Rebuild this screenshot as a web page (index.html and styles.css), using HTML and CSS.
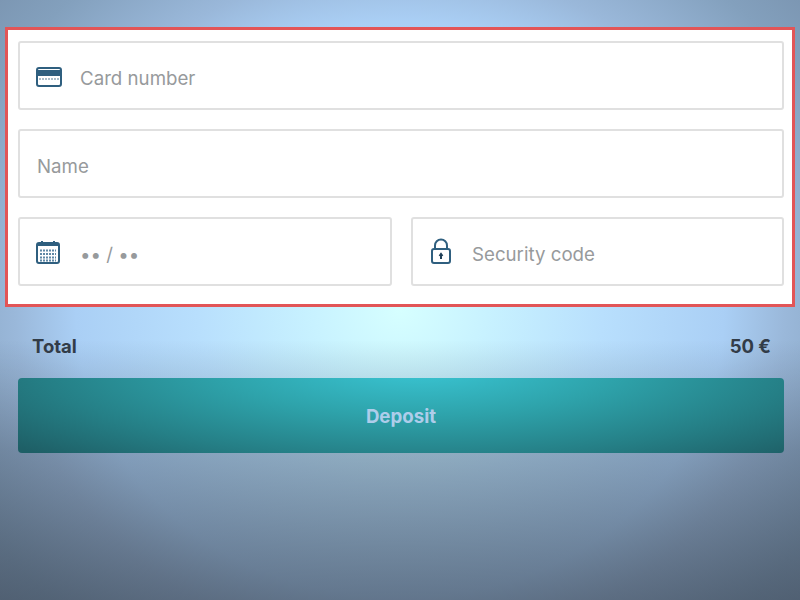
FILE: index.html
```html
<!DOCTYPE html>
<html>
	<head>
		<meta charset="utf-8">
		<title>Deposit</title>
		<link rel="stylesheet" href="styles.css">
	</head>
	<body>
		<form class="pay">
			<div class="card-box">
				<div class="field field-card">
					<svg class="icon icon-card" width="26" height="20" viewBox="0 0 26 20">
						<rect x="1" y="1" width="24" height="18" rx="2" fill="#fff" stroke="#2f5f7f" stroke-width="2"/>
						<rect x="1" y="3" width="24" height="6" fill="#2f5f7f"/>
						<path d="M3 12h20" stroke="#8fa9bb" stroke-width="1.500" stroke-dasharray="2 1"/>
					</svg>
					<span class="hint">Card number</span>
				</div>
				<div class="field">
					<span class="hint">Name</span>
				</div>
				<div class="row">
					<div class="field field-card field-date">
						<svg class="icon icon-cal" width="24" height="24" viewBox="0 0 24 24">
							<rect x="1" y="3" width="22" height="20" rx="2" fill="#fff" stroke="#2f5f7f" stroke-width="2"/>
							<rect x="2" y="4" width="20" height="2" fill="#2f5f7f"/>
							<path d="M6 1v5M18 1v5" stroke="#2f5f7f" stroke-width="2"/>
							<path d="M4 10.500h16M4 14h16M4 17.500h16M4 20.500h16" stroke="#5f88a5" stroke-width="2" stroke-dasharray="2 1"/>
						</svg>
						<span class="hint">•• / ••</span>
					</div>
					<div class="field field-lock">
						<svg class="icon" width="20" height="26" viewBox="0 0 20 26">
							<path d="M4 11V7.500a6 6 0 0 1 12 0V11" fill="none" stroke="#2f5f7f" stroke-width="2"/>
							<rect x="1" y="11" width="18" height="14" rx="2" fill="#fff" stroke="#2f5f7f" stroke-width="2"/>
							<path d="M10 21v-5M8.500 18l1.500-2 1.500 2" fill="none" stroke="#1f3f57" stroke-width="2"/>
						</svg>
						<span class="hint">Security code</span>
					</div>
				</div>
			</div>
			<div class="total">
				<span>Total</span>
				<span>50 €</span>
			</div>
			<button class="deposit" type="button">Deposit</button>
		</form>
	</body>
</html>
```

FILE: styles.css
```css
html, body {
	height: 100%;
}

body {
	margin: 0;
	font-family: Inter, "Liberation Sans", sans-serif;
	background:
		linear-gradient(to bottom, rgba(50, 58, 70, 0) 340px, rgba(50, 58, 70, 0.33) 450px, rgba(50, 58, 70, 0.6) 600px),
		radial-gradient(ellipse 675px 600px at 400px 310px, #d6ffff 0%, #c8f2ff 13%, #b8dffd 30%, #aacff5 48%, #9ab8da 57%, #83a0bd 71%, #7a94b0 81%);
	overflow: hidden;
}

.pay {
	padding: 27px 5px 0;
}

.card-box {
	background: #fff;
	border: 3px solid #e25557;
	padding: 11px 8px 18px 10px;
	display: flex;
	flex-direction: column;
	gap: 19px;
}

.row {
	display: flex;
	gap: 19px;
}

.row .field {
	flex: 1;
}

.row .field-date {
	flex: none;
	width: 374px;
}

.field {
	height: 69px;
	box-sizing: border-box;
	border: 2px solid #e0e0e0;
	border-radius: 3px;
	background: #fff;
	display: flex;
	align-items: center;
	padding: 6px 17px 0;
}

.field-card {
	padding-left: 16px;
}

.field-lock {
	padding-left: 18px;
}

.icon {
	flex: none;
	margin-right: 18px;
	margin-top: -6px;
}

.icon-card {
	margin-top: -4px;
}

.icon-cal {
	margin-right: 20px;
	margin-top: -6px;
}

.field-lock .icon {
	margin-right: 21px;
	margin-top: -8px;
}

.hint {
	font-size: 18.7px;
	color: #979a9c;
}

.total {
	display: flex;
	justify-content: space-between;
	padding: 28px 24px 0 27px;
	font-size: 18.500px;
	font-weight: 700;
	line-height: 22px;
	color: #323c48;
}

.deposit {
	display: block;
	width: 766px;
	height: 75px;
	margin: 21px 0 0 13px;
	padding: 2px 0 0;
	border: 0;
	border-radius: 4px;
	background: radial-gradient(ellipse 520px 125px at 400px -10px, #3ac6d4 0%, #2ea3ab 38%, #257f86 72%, #1e5f66 100%);
	color: #aecdea;
	font-family: Inter, "Liberation Sans", sans-serif;
	font-size: 18.7px;
	font-weight: 700;
}
```
